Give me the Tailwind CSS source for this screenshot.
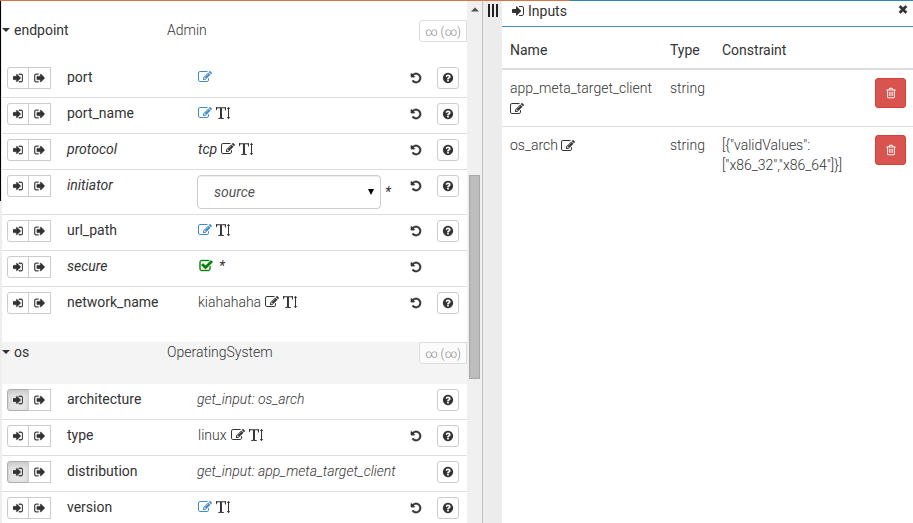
<!DOCTYPE html>
<html lang="en">
<head>
<meta charset="utf-8">
<title>Inputs</title>
<script src="https://cdn.jsdelivr.net/npm/@tailwindcss/browser@4"></script>
</head>
<body class="bg-white text-sm leading-5 text-[#333] font-['Roboto',sans-serif]">
<svg class="hidden" aria-hidden="true">
  <symbol id="sign-in" viewBox="0 0 1536 1792"><path d="M1184 896q0 26-19 45l-544 544q-19 19-45 19t-45-19-19-45v-288h-448q-26 0-45-19t-19-45v-384q0-26 19-45t45-19h448v-288q0-26 19-45t45-19 45 19l544 544q19 19 19 45zm352-352v704q0 119-84.5 203.5t-203.5 84.5h-320q-13 0-22.5-9.5t-9.5-22.5q0-4-1-20t-.5-26.5 3-23.5 10-19.5 20.5-6.5h320q66 0 113-47t47-113v-704q0-66-47-113t-113-47h-312l-11.5-1-11.5-3-8-5.5-7-9-2-13.5q0-4-1-20t-.5-26.5 3-23.5 10-19.5 20.5-6.5h320q119 0 203.5 84.5t84.5 203.5z"/></symbol>
  <symbol id="sign-out" viewBox="0 0 1568 1792"><path d="M640 1440q0 4 1 20t.5 26.5-3 23.5-10 19.5-20.5 6.5h-320q-119 0-203.5-84.5t-84.5-203.5v-704q0-119 84.5-203.5t203.5-84.5h320q13 0 22.5 9.5t9.5 22.5q0 4 1 20t.5 26.5-3 23.5-10 19.5-20.5 6.5h-320q-66 0-113 47t-47 113v704q0 66 47 113t113 47h312l11.5 1 11.5 3 8 5.5 7 9 2 13.5zm928-544q0 26-19 45l-544 544q-19 19-45 19t-45-19-19-45v-288h-448q-26 0-45-19t-19-45v-384q0-26 19-45t45-19h448v-288q0-26 19-45t45-19 45 19l544 544q19 19 19 45z"/></symbol>
  <symbol id="edit" viewBox="0 0 1792 1792"><path d="M888 1184l116-116-152-152-116 116v56h96v96h56zm440-720q-16-16-33 1l-350 350q-17 17-1 33t33-1l350-350q17-17 1-33zm80 594v190q0 119-84.5 203.5t-203.5 84.5h-832q-119 0-203.5-84.5t-84.5-203.5v-832q0-119 84.5-203.5t203.5-84.5h832q63 0 117 25 15 7 18 23 3 17-9 29l-49 49q-14 14-32 8-23-6-45-6h-832q-66 0-113 47t-47 113v832q0 66 47 113t113 47h832q66 0 113-47t47-113v-126q0-13 9-22l64-64q15-15 35-7t20 29zm-96-738l288 288-672 672h-288v-288zm444 132l-92 92-288-288 92-92q28-28 68-28t68 28l152 152q28 28 28 68t-28 68z"/></symbol>
  <symbol id="check" viewBox="0 0 1792 1792"><path d="M1472 930v318q0 119-84.5 203.5t-203.5 84.5h-832q-119 0-203.5-84.5t-84.5-203.5v-832q0-119 84.5-203.5t203.5-84.5h832q63 0 117 25 15 7 18 23 3 17-9 29l-49 49q-10 10-23 10-3 0-9-2-23-6-45-6h-832q-66 0-113 47t-47 113v832q0 66 47 113t113 47h832q66 0 113-47t47-113v-254q0-13 9-22l64-64q10-10 23-10 6 0 12 3 20 8 20 29zm231-489l-814 814q-24 24-57 24t-57-24l-430-430q-24-24-24-57t24-57l110-110q24-24 57-24t57 24l263 263 647-647q24-24 57-24t57 24l110 110q24 24 24 57t-24 57z"/></symbol>
  <symbol id="text-height" viewBox="0 0 1792 1792"><path d="M1744 1408q33 0 42 18.5t-11 44.5l-126 162q-20 26-49 26t-49-26l-126-162q-20-26-11-44.5t42-18.5h80v-1024h-80q-33 0-42-18.5t11-44.5l126-162q20-26 49-26t49 26l126 162q20 26 11 44.5t-42 18.5h-80v1024h80zm-1663-1279l54 27q12 5 211 5 44 0 132-2t132-2q36 0 107.5.5t107.5.5h293q6 0 21 .5t20.5 0 16-3 17.5-9 15-17.5l42-1q4 0 14 .5t14 .5q2 112 2 336 0 80-5 109-39 14-68 18-25-44-54-128-3-9-11-48t-14.5-73.5-7.5-35.5q-6-8-12-12.5t-15.5-6-13-2.5-18-.5-16.5.5q-17 0-66.5-.5t-74.5-.5-64 2-71 6q-9 81-8 136 0 94 2 388t2 455q0 16-2.5 71.5t0 91.5 12.5 69q40 21 124 42.5t120 37.5q5 40 5 50 0 14-3 29l-34 1q-76 2-218-8t-207-10q-50 0-151 9t-152 9q-3-51-3-52v-9q17-27 61.5-43t98.5-29 78-27q19-42 19-383 0-101-3-303t-3-303v-117q0-2 .5-15.5t.5-25-1-25.5-3-24-5-14q-11-12-162-12-33 0-93 12t-80 26q-19 13-34 72.5t-31.5 111-42.5 53.5q-42-26-56-44v-383z"/></symbol>
  <symbol id="undo" viewBox="0 0 1792 1792"><path d="M1664 896q0 156-61 298t-164 245-245 164-298 61q-172 0-327-72.5t-264-204.5q-7-10-6.500-22.500t8.500-20.500l137-138q10-9 25-9 16 2 23 12 73 95 179 147t225 52q104 0 198.500-40.500t163.500-109.500 109.500-163.500 40.500-198.500-40.500-198.500-109.500-163.500-163.500-109.500-198.500-40.500q-98 0-188 35.500t-160 101.500l137 138q31 30 14 69-17 40-59 40h-448q-26 0-45-19t-19-45v-448q0-42 40-59 39-17 69 14l130 129q107-101 244.500-156.500t284.500-55.500q156 0 298 61t245 164 164 245 61 298z"/></symbol>
  <symbol id="help" viewBox="0 0 1792 1792"><path d="M1024 1376v-192q0-14-9-23t-23-9h-192q-14 0-23 9t-9 23v192q0 14 9 23t23 9h192q14 0 23-9t9-23zm256-672q0-88-55.5-163t-138.5-116-170-41q-243 0-371 213-15 24 8 42l132 100q7 6 19 6 16 0 25-12 53-68 86-92 34-24 86-24 48 0 85.5 26t37.5 59q0 38-20 61t-68 45q-63 28-115.5 86.5t-52.5 125.5v36q0 14 9 23t23 9h192q14 0 23-9t9-23q0-19 21.5-49.5t54.5-49.5q32-18 49-28.5t46-35 44.5-48 28-60.5 12.5-81zm384 192q0 209-103 385.5t-279.5 279.5-385.5 103-385.5-103-279.5-279.5-103-385.5 103-385.5 279.5-279.5 385.5-103 385.5 103 279.5 279.5 103 385.5z"/></symbol>
  <symbol id="trash" viewBox="0 0 1792 1792"><path d="M704 736v576q0 14-9 23t-23 9h-64q-14 0-23-9t-9-23v-576q0-14 9-23t23-9h64q14 0 23 9t9 23zm256 0v576q0 14-9 23t-23 9h-64q-14 0-23-9t-9-23v-576q0-14 9-23t23-9h64q14 0 23 9t9 23zm256 0v576q0 14-9 23t-23 9h-64q-14 0-23-9t-9-23v-576q0-14 9-23t23-9h64q14 0 23 9t9 23zm128 724v-948h-896v948q0 22 7 40.5t14.5 27 10.5 8.5h832q3 0 10.5-8.5t14.5-27 7-40.5zm-672-1076h448l-48-117q-7-9-17-11h-317q-10 2-17 11zm928 32v64q0 14-9 23t-23 9h-96v948q0 83-47 143.5t-113 60.5h-832q-66 0-113-58.5t-47-141.5v-952h-96q-14 0-23-9t-9-23v-64q0-14 9-23t23-9h309l70-167q15-37 54-63t79-26h320q40 0 79 26t54 63l70 167h309q14 0 23 9t9 23z"/></symbol>
  <symbol id="times" viewBox="0 0 1792 1792"><path d="M1490 1322q0 40-28 68l-136 136q-28 28-68 28t-68-28l-294-294-294 294q-28 28-68 28t-68-28l-136-136q-28-28-28-68t28-68l294-294-294-294q-28-28-28-68t28-68l136-136q28-28 68-28t68 28l294 294 294-294q28-28 68-28t68 28l136 136q28 28 28 68t-28 68l-294 294 294 294q28 28 28 68z"/></symbol>
</svg>

<div class="flex h-screen flex-col overflow-hidden">
  <div class="grid h-px shrink-0 grid-cols-[570fr_343fr]">
    <div class="bg-[#d9734e]"></div>
    <div class="bg-[#2f86ad]"></div>
  </div>
  <div class="grid min-h-0 grow grid-cols-[467fr_15px_20px_411fr] grid-rows-[minmax(0,1fr)]">
    <section class="flex min-w-0">
      <div class="grid w-0.5 shrink-0 grid-rows-[200fr_322fr] bg-[#eee]">
        <div class="mr-px bg-black"></div>
      </div>
      <div id="capabilities" class="min-w-0 grow overflow-hidden pt-[19px]"></div>
    </section>

    <div class="grid grid-rows-[174fr_204fr_144fr] bg-[#f0f0f0]" aria-hidden="true">
      <div class="flex justify-center pt-[6px]">
        <svg class="h-[5px] w-2 fill-[#505050]" viewBox="0 0 8 5"><path d="M4 0.5 8 4.500H0z"/></svg>
      </div>
      <div class="mr-0.5 ml-0.5 border border-[#a8a8a8] bg-[#bcbcbc]"></div>
    </div>

    <div class="flex items-start justify-center border-l border-[#c0c0c0] bg-[#ececec] pt-[3px]">
      <button type="button" aria-label="Resize panels" class="flex gap-0.5">
        <span class="h-[13px] w-0.5 bg-[#222]"></span><span class="h-[13px] w-0.5 bg-[#222]"></span><span class="h-[13px] w-0.5 bg-[#222]"></span>
      </button>
    </div>

    <section class="min-w-0">
      <header class="flex h-[26px] items-start justify-between border-b border-[#428bca] pr-1 pl-[10px]">
        <h2 class="flex items-center gap-1"><svg class="h-[14px] w-3 fill-current"><use href="#sign-in"/></svg>Inputs</h2>
        <button type="button" aria-label="Close" class="pt-[2px]"><svg class="size-3 fill-current stroke-current stroke-[50]"><use href="#times"/></svg></button>
      </header>
      <table class="mt-[5px] w-full table-fixed border-separate border-spacing-0 text-left">
        <thead>
          <tr>
            <th class="w-[160px] border-b-2 border-[#ddd] p-2 font-normal">Name</th>
            <th class="w-[52px] border-b-2 border-[#ddd] p-2 font-normal">Type</th>
            <th class="border-b-2 border-[#ddd] p-2 font-normal">Constraint</th>
            <th class="w-[46px] border-b-2 border-[#ddd] p-2"></th>
          </tr>
        </thead>
        <tbody class="align-top font-light">
          <tr>
            <td class="border-b border-[#ddd] p-2">app_meta_target_client <button type="button" aria-label="Edit app_meta_target_client" class="align-middle"><svg class="size-[14px] fill-current"><use href="#edit"/></svg></button></td>
            <td class="border-b border-[#ddd] p-2">string</td>
            <td class="border-b border-[#ddd] p-2"></td>
            <td class="border-b border-[#ddd] p-2"><button type="button" aria-label="Delete app_meta_target_client" class="flex h-[30px] w-[31px] items-center justify-center rounded-[3px] border border-[#d43f3a] bg-[#d9534f] text-white"><svg class="size-3 fill-current"><use href="#trash"/></svg></button></td>
          </tr>
          <tr>
            <td class="p-2">os_arch <button type="button" aria-label="Edit os_arch" class="align-middle"><svg class="size-[14px] fill-current"><use href="#edit"/></svg></button></td>
            <td class="p-2">string</td>
            <td class="p-2">[{"validValues":<wbr>["x86_32","x86_64"]}]</td>
            <td class="p-2"><button type="button" aria-label="Delete os_arch" class="flex h-[30px] w-[31px] items-center justify-center rounded-[3px] border border-[#d43f3a] bg-[#d9534f] text-white"><svg class="size-3 fill-current"><use href="#trash"/></svg></button></td>
          </tr>
        </tbody>
      </table>
    </section>
  </div>
</div>

<script>
const groups = [
  { name: 'endpoint', type: 'Admin', shade: 'bg-white', rows: [
    { name: 'port', edit: 'blue', undo: true, help: true },
    { name: 'port_name', edit: 'blue', long: true, undo: true, help: true },
    { name: 'protocol', required: true, value: 'tcp', edit: 'dark', long: true, undo: true, help: true },
    { name: 'initiator', required: true, options: ['source', 'target', 'peer'], undo: true, help: true },
    { name: 'url_path', edit: 'blue', long: true, undo: true, help: true },
    { name: 'secure', required: true, checked: true, undo: true },
    { name: 'network_name', value: 'kiahahaha', edit: 'dark', long: true, undo: true, help: true },
  ]},
  { name: 'os', type: 'OperatingSystem', shade: 'bg-[#f4f4f4]', rows: [
    { name: 'architecture', input: 'os_arch', help: true },
    { name: 'type', value: 'linux', edit: 'dark', long: true, undo: true, help: true },
    { name: 'distribution', input: 'app_meta_target_client', help: true },
    { name: 'version', edit: 'blue', long: true, undo: true, help: true },
  ]},
];

function value(r) {
  if (r.input) return `<span class="font-light italic">get_input: ${r.input}</span>`;
  if (r.options) return `<div class="flex items-center gap-1 italic">
    <div class="relative">
      <select aria-label="${r.name}" class="h-[34px] w-[184px] appearance-none rounded border border-[#ccc] bg-white pl-4 italic text-[#555] shadow-[inset_0_1px_1px_rgba(0,0,0,0.075)]">${r.options.map(o => `<option>${o}</option>`).join('')}</select>
      <svg class="pointer-events-none absolute top-[14px] right-[7px] h-[6px] w-[6px] fill-black" viewBox="0 0 6 6"><path d="M0 0h6L3 6z"/></svg>
    </div>*</div>`;
  if (r.checked) return `<div class="flex h-5 items-center gap-1.5 pl-0.5 italic"><label class="relative flex"><input type="checkbox" checked aria-label="${r.name}" class="absolute size-[14px] appearance-none"><svg class="size-[14px] fill-[#008000] stroke-[#008000] stroke-[50]"><use href="#check"/></svg></label>*</div>`;
  const text = r.value ? `<span class="${r.required ? 'italic' : 'font-light'}">${r.value}</span>` : '';
  const color = r.edit === 'blue' ? 'text-[#428bca]' : 'text-[#333]';
  const long = r.long ? `<button type="button" aria-label="Long text for ${r.name}"><svg class="size-[14px] fill-current"><use href="#text-height"/></svg></button>` : '';
  return `<div class="flex h-5 items-center gap-1 pl-px">${text}<button type="button" aria-label="Edit ${r.name}" class="${color}"><svg class="size-[14px] fill-current"><use href="#edit"/></svg></button>${long}</div>`;
}

function row(r, last) {
  const cell = last ? 'border-b border-transparent py-[5px]' : 'border-b border-[#ddd] py-[5px]';
  const pressed = r.input ? 'bg-[#e6e6e6] border-[#adadad] shadow-[inset_0_3px_5px_rgba(0,0,0,0.125)]' : 'bg-white border-[#ccc]';
  return `<tr class="h-9 align-top">
    <td class="w-[65px] pl-[5px] ${cell}"><div class="flex">
      <button type="button" aria-label="Set ${r.name} as input" class="flex h-[22px] w-[22px] items-center justify-center rounded-l-[3px] border ${pressed}"><svg class="h-3 w-[10px] fill-current stroke-current stroke-[50]"><use href="#sign-in"/></svg></button>
      <button type="button" aria-label="Set ${r.name} as output" class="-ml-px flex h-[22px] w-[23px] items-center justify-center border border-[#ccc] bg-white"><svg class="h-3 w-[11px] fill-current stroke-current stroke-[50]"><use href="#sign-out"/></svg></button>
    </div></td>
    <th class="w-[130px] text-left font-normal ${r.required ? 'italic' : ''} ${cell}">${r.name}</th>
    <td class="${cell}">${value(r)}</td>
    <td class="w-[27px] ${cell}">${r.undo ? `<button type="button" aria-label="Reset ${r.name}" class="flex h-[22px] items-center"><svg class="size-3 fill-current stroke-current stroke-[50]"><use href="#undo"/></svg></button>` : ''}</td>
    <td class="w-[30px] ${cell}">${r.help ? `<button type="button" aria-label="Help for ${r.name}" class="flex h-[22px] w-[22px] items-center justify-center rounded-[3px] border border-[#ccc] bg-white"><svg class="size-3 fill-current"><use href="#help"/></svg></button>` : ''}</td>
  </tr>`;
}

document.getElementById('capabilities').innerHTML = groups.map(g => `
  <header class="flex h-[42px] items-start ${g.shade}">
    <h3 class="w-[165px]"><button type="button" class="flex items-center gap-1"><svg class="h-1 w-2 fill-current" viewBox="0 0 8 4"><path d="M0 0h8L4 4z"/></svg>${g.name}</button></h3>
    <span class="grow font-light">${g.type}</span>
    <button type="button" disabled class="h-[22px] w-12 rounded-l-[3px] border border-[#ddd] bg-white/65 pt-0.5 text-xs font-light text-[#888]">∞ (∞)</button>
  </header>
  <table class="mb-[19px] w-full table-fixed border-separate border-spacing-0">${g.rows.map((r, i) => row(r, i === g.rows.length - 1)).join('')}</table>`).join('');
</script>
</body>
</html>
